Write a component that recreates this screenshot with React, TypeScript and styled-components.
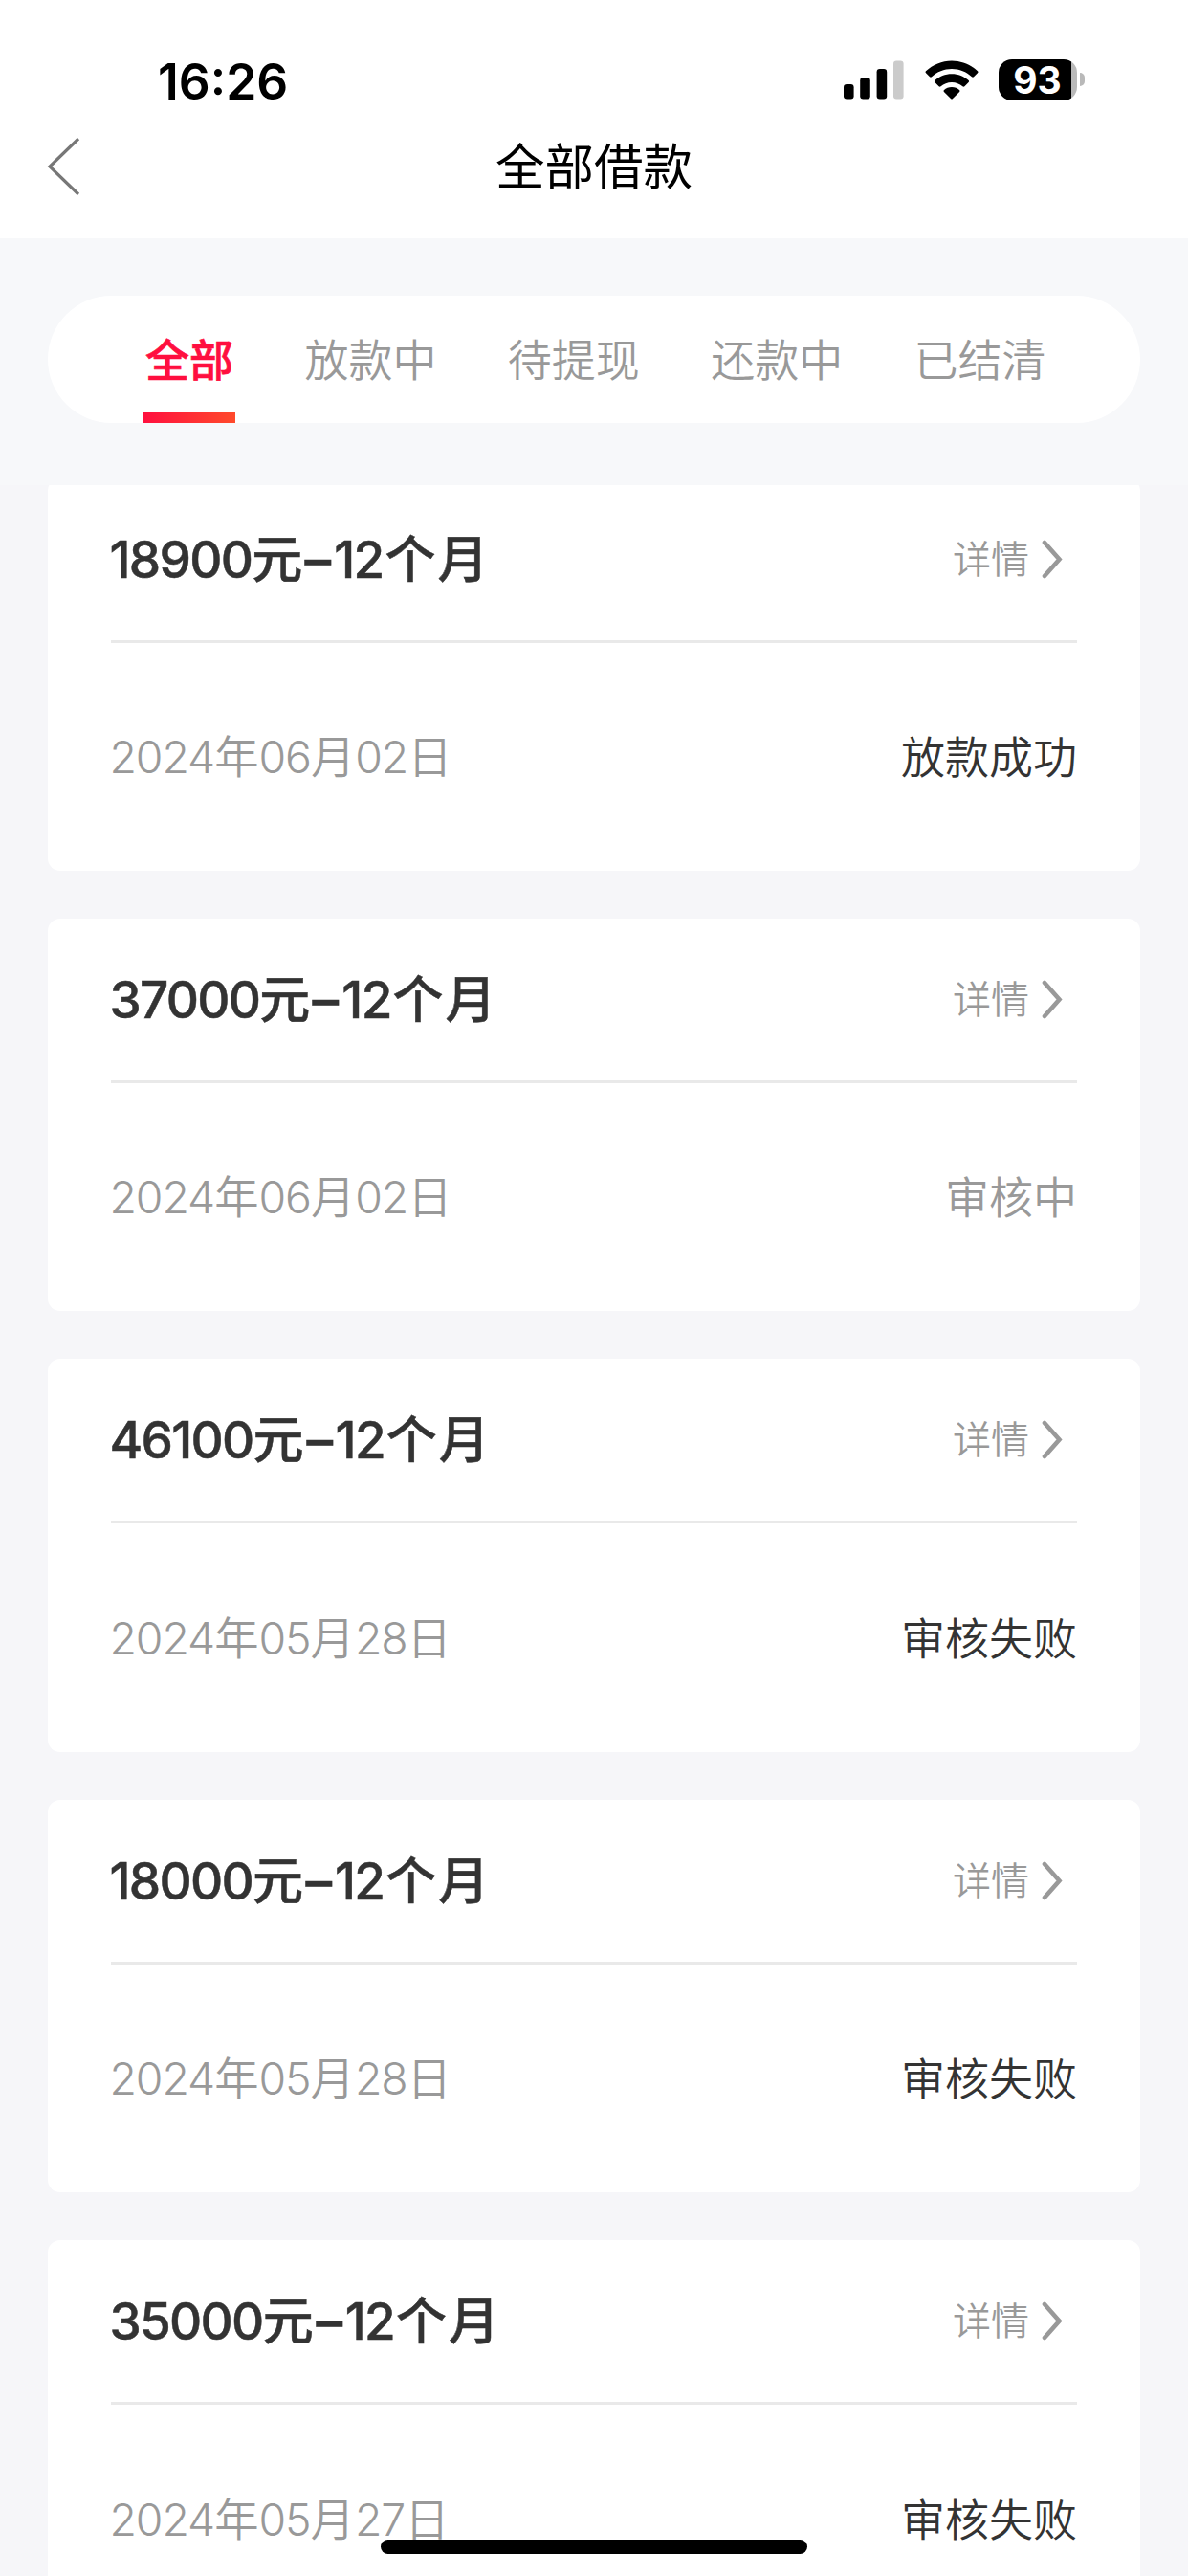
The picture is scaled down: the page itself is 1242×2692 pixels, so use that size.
import React from "react";
import styled, { createGlobalStyle } from "styled-components";

const GlobalStyle = createGlobalStyle`
  *, *::before, *::after { box-sizing: border-box; }
  html, body { margin: 0; padding: 0; }
  body {
    background: #f6f6f9;
    font-family: Inter, "Noto Sans CJK SC", sans-serif;
    overflow: hidden;
  }
`;

const Screen = styled.main`
  display: flex;
  flex-direction: column;
  width: 1242px;
  height: 2692px;
  overflow: hidden;
  position: relative;
`;

const Header = styled.header`
  height: 249px;
  background: #fff;
  flex: none;
`;

const StatusBar = styled.div`
  display: flex;
  justify-content: space-between;
  align-items: center;
  height: 124px;
  padding: 44px 108px 0 165px;
`;

const Clock = styled.time`
  padding-top: 1px;
  font-size: 51.5px;
  font-weight: 600;
  line-height: 80px;
  color: #000;
`;

const Indicators = styled.div`
  display: flex;
  align-items: center;
  height: 80px;
  padding-bottom: 2px;
`;

const Signal = styled.svg`
  display: block;
  margin-right: 22px;
`;

const Wifi = styled.svg`
  display: block;
  margin-right: 21px;
`;

const Battery = styled.div`
  display: flex;
  align-items: center;
  gap: 3px;
`;

const BatteryBody = styled.div`
  display: flex;
  align-items: center;
  justify-content: center;
  width: 82px;
  height: 43px;
  padding-right: 1px;
  border-radius: 14px;
  background: linear-gradient(to right, #000 76px, #b9b9b9 76px);
  color: #fff;
  font-size: 39px;
  font-weight: 700;
  line-height: 43px;
`;

const BatteryTip = styled.div`
  width: 5px;
  height: 14px;
  border-radius: 0 5px 5px 0;
  background: #b9b9b9;
`;

const NavBar = styled.nav`
  display: grid;
  grid-template-columns: 90px 1fr 90px;
  align-items: center;
  height: 100px;
  padding: 0 46px;
`;

const BackIcon = styled.svg`
  display: block;
`;

const PageTitle = styled.h1`
  margin: 0;
  text-align: center;
  font-size: 51.5px;
  font-weight: 400;
  line-height: 80px;
  color: #000;
`;

const TabArea = styled.section`
  flex: none;
  height: 258px;
  padding: 60px 50px 65px;
  background: #f7f8fa;
`;

const TabList = styled.div`
  display: flex;
  gap: 74.4px;
  height: 133px;
  padding-left: 102px;
  border-radius: 67px;
  background: #fff;
`;

const Tab = styled.div<{ $active?: boolean }>`
  display: flex;
  flex-direction: column;
  align-items: center;
  justify-content: space-between;
  padding-top: 33px;
  font-size: 46px;
  line-height: 68px;
  white-space: nowrap;
  color: ${(p) => (p.$active ? "#ff0f3f" : "#999")};
  font-weight: ${(p) => (p.$active ? 500 : 350)};
  -webkit-text-stroke: ${(p) => (p.$active ? "0.7px currentColor" : "0")};
`;

const TabLine = styled.span`
  width: 97px;
  height: 11px;
  margin: 0 -2px 0 -3px;
  background: linear-gradient(100deg, #ff0f3f, #ff4a2b);
`;

const ListArea = styled.section`
  flex: 1;
  min-height: 0;
  overflow: hidden;
  background: #f6f6f9;
`;

const CardStack = styled.div`
  display: flex;
  flex-direction: column;
  gap: 50px;
  margin-top: -7.5px;
  padding: 0 50px;
`;

const Card = styled.article`
  flex: none;
  height: 410.4px;
  padding: 0 66px 0 65.5px;
  border-radius: 13px;
  background: #fff;
`;

const CardHead = styled.div`
  display: flex;
  justify-content: space-between;
  align-items: center;
  height: 172px;
  padding-top: 1px;
  border-bottom: 3.4px solid #e9e9e9;
`;

const Amount = styled.h2`
  margin: 0 0 0 -1px;
  font-size: 53px;
  font-weight: 500;
  line-height: 80px;
  color: #333;
  white-space: nowrap;
  -webkit-text-stroke: 0.5px currentColor;
`;

const Digits = styled.span`
  letter-spacing: -1.7px;
  font-weight: 550;
`;

const Dash = styled.span`
  display: inline-block;
  margin: 0 3.5px 0 3px;
  transform: scaleX(1.04);
  font-weight: 600;
`;

const Term = styled.span`
  margin-left: 2px;
  letter-spacing: 2px;
`;

const Detail = styled.span`
  display: flex;
  align-items: center;
  gap: 12px;
  padding-right: 14px;
  font-size: 40px;
  font-weight: 350;
  line-height: 60px;
  color: #999;
`;

const CardBody = styled.div`
  display: flex;
  justify-content: space-between;
  align-items: center;
  height: 238px;
  padding-top: 1px;
  font-size: 46.4px;
  line-height: 70px;
`;

const LoanDate = styled.span`
  margin-left: -1px;
  color: #999;
  font-weight: 350;
  white-space: nowrap;
`;

const DateNumber = styled.span`
  letter-spacing: -1.1px;
`;

const State = styled.span<{ $muted?: boolean }>`
  color: ${(p) => (p.$muted ? "#999" : "#333")};
  font-size: 46px;
  font-weight: 350;
`;

const HomeBar = styled.div`
  position: absolute;
  left: 398px;
  bottom: 23px;
  width: 446px;
  height: 15px;
  border-radius: 8px;
  background: #000;
`;

const tabs = ["全部", "放款中", "待提现", "还款中", "已结清"];

interface Loan {
  amount: string;
  date: [string, string, string];
  state: string;
  muted?: boolean;
}

const loans: Loan[] = [
  { amount: "18900", date: ["2024", "06", "02"], state: "放款成功" },
  { amount: "37000", date: ["2024", "06", "02"], state: "审核中", muted: true },
  { amount: "46100", date: ["2024", "05", "28"], state: "审核失败" },
  { amount: "18000", date: ["2024", "05", "28"], state: "审核失败" },
  { amount: "35000", date: ["2024", "05", "27"], state: "审核失败" },
];

function LoanCard({ loan }: { loan: Loan }) {
  const [year, month, day] = loan.date;
  return (
    <Card>
      <CardHead>
        <Amount>
          <Digits>{loan.amount}</Digits>元<Dash>–</Dash>
          <Digits>12</Digits>
          <Term>个月</Term>
        </Amount>
        <Detail>
          详情
          <svg width="24" height="42" viewBox="0 0 24 42" fill="none">
            <path d="M4 3L19.500 20.500L4 38" stroke="#999" strokeWidth="4.6" strokeLinecap="round" />
          </svg>
        </Detail>
      </CardHead>
      <CardBody>
        <LoanDate>
          <DateNumber>{year}</DateNumber>年<DateNumber>{month}</DateNumber>月
          <DateNumber>{day}</DateNumber>日
        </LoanDate>
        <State $muted={loan.muted}>{loan.state}</State>
      </CardBody>
    </Card>
  );
}

export default function App() {
  return (
    <Screen>
      <GlobalStyle />
      <Header>
        <StatusBar>
          <Clock>16:26</Clock>
          <Indicators>
            <Signal width="63" height="41" viewBox="0 0 63 41">
              <rect x="0" y="25" width="10.6" height="15.5" rx="3.2" />
              <rect x="17.2" y="18" width="10.6" height="22.5" rx="3.2" />
              <rect x="34.6" y="9" width="10.6" height="31.5" rx="3.2" />
              <rect x="52" y="0.5" width="10.6" height="40" rx="3.2" fill="#cbcbcb" />
            </Signal>
            <Wifi width="56" height="41" viewBox="0 0 56 41">
              <path d="M28 .4C38.400 .4 47.800 4.500 55 11.200Q56 12.200 55 13.200L51 17.300Q50 18.200 49 17.300C43.400 12.200 36 9.100 28 9.100S12.600 12.200 7 17.300Q6 18.200 5 17.300L1 13.200Q0 12.200 1 11.200C8.200 4.500 17.600 .4 28 .4Z" />
              <path d="M28 14.200C34.800 14.200 41 16.800 45.600 21Q46.700 22 45.600 23.100L41.400 27.200Q40.400 28.100 39.400 27.200C36.400 24.500 32.400 22.900 28 22.900S19.600 24.500 16.600 27.200Q15.600 28.100 14.600 27.200L10.400 23.100Q9.300 22 10.400 21C15 16.800 21.200 14.200 28 14.200Z" />
              <path d="M28 28C31.200 28 34 29.100 36 31Q37.100 32 36.100 33L29 40Q28 41 27 40L19.900 33Q18.900 32 20 31C22 29.100 24.800 28 28 28Z" />
            </Wifi>
            <Battery>
              <BatteryBody>93</BatteryBody>
              <BatteryTip />
            </Battery>
          </Indicators>
        </StatusBar>
        <NavBar>
          <BackIcon width="40" height="64" viewBox="0 0 40 64" fill="none">
            <path d="M36 3L6 32L36 61" stroke="#777" strokeWidth="3.2" />
          </BackIcon>
          <PageTitle>全部借款</PageTitle>
        </NavBar>
      </Header>
      <TabArea>
        <TabList>
          {tabs.map((name, i) => (
            <Tab key={name} $active={i === 0}>
              {name}
              {i === 0 && <TabLine />}
            </Tab>
          ))}
        </TabList>
      </TabArea>
      <ListArea>
        <CardStack>
          {loans.map((loan, i) => (
            <LoanCard key={i} loan={loan} />
          ))}
        </CardStack>
      </ListArea>
      <HomeBar />
    </Screen>
  );
}
